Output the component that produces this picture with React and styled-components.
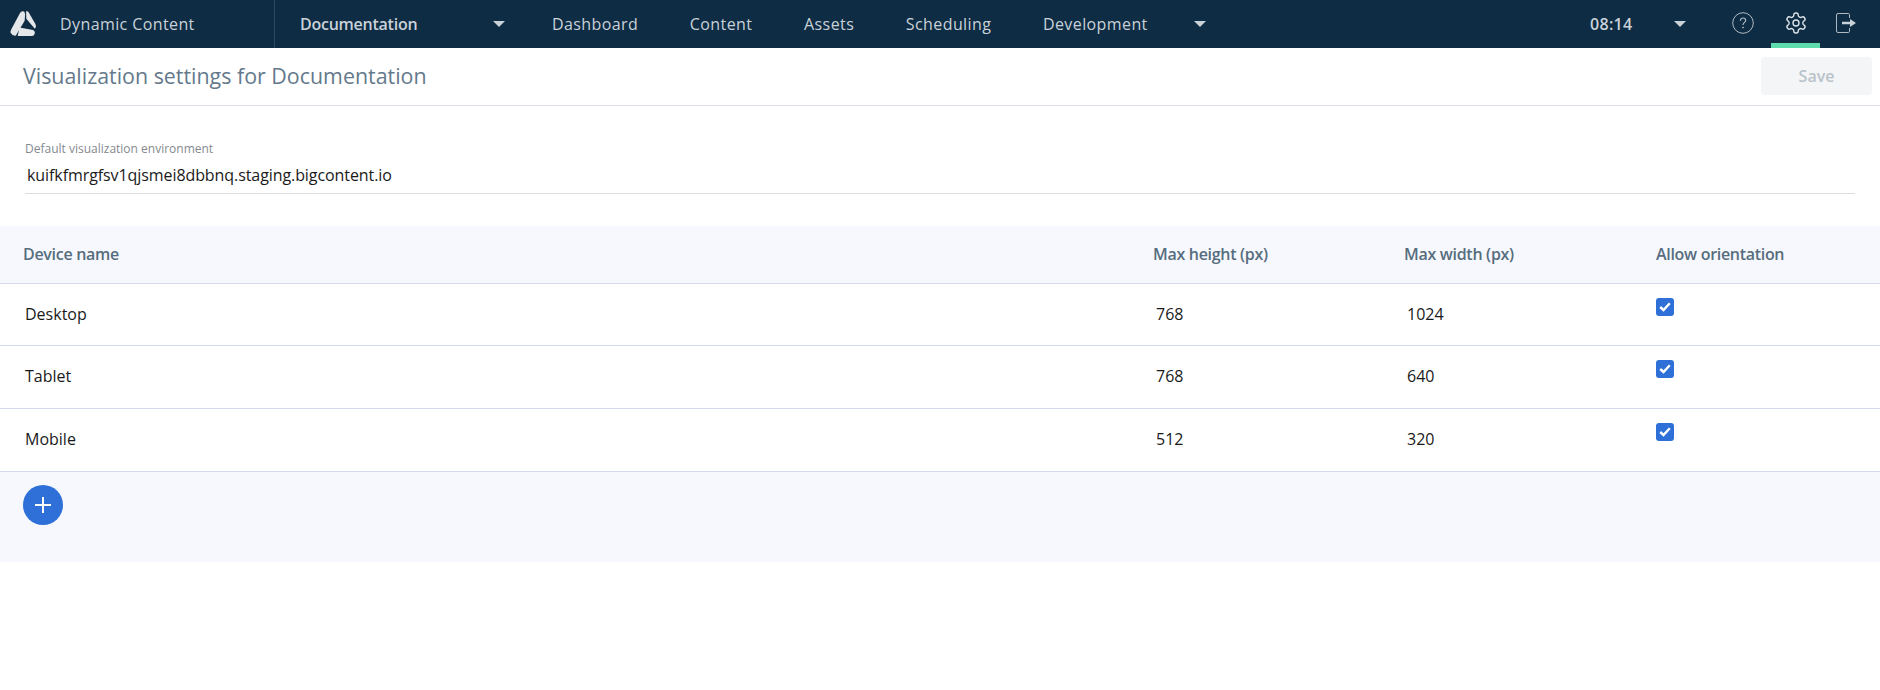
import styled, { createGlobalStyle } from 'styled-components'

const GlobalStyle = createGlobalStyle`
  html, body { margin: 0; padding: 0; background: #fff; }
  body { font-family: "Open Sans", "Noto Sans", sans-serif; }
  * { box-sizing: border-box; }
`

const Page = styled.div`
  width: 1880px;
  height: 690px;
  overflow: hidden;
`
const Header = styled.header`
  height: 48px;
  background: #0e2c44;
  display: flex;
  align-items: stretch;
  color: #c9d2d9;
  font-size: 16px;
`
const Brand = styled.div`
  width: 275px;
  border-right: 1px solid #31495d;
  display: flex;
  align-items: center;
  padding-left: 10px;
  gap: 24px;
  letter-spacing: 0.4px;
  svg { margin-bottom: 2px; }
`
const Account = styled.div`
  width: 230px;
  padding-left: 25px;
  display: flex;
  align-items: center;
  justify-content: space-between;
  font-weight: 600;
  letter-spacing: -0.25px;
`
const Caret = styled.span`
  width: 0;
  height: 0;
  border-left: 6px solid transparent;
  border-right: 6px solid transparent;
  border-top: 6px solid #c9d2d9;
`
const Nav = styled.nav`
  display: flex;
  align-items: center;
  margin-left: 47px;
  gap: 51.7px;
  letter-spacing: 0.4px;
`
const NavItem = styled.span`
  white-space: nowrap;
`
const NavCaret = styled(Caret)`
  margin-left: -5px;
`
const Right = styled.div`
  margin-left: auto;
  display: flex;
  align-items: stretch;
  padding-right: 8px;
`
const Clock = styled.div`
  display: flex;
  align-items: center;
  font-weight: 600;
  width: 125px;
  gap: 42px;
  letter-spacing: 0.3px;
`
const IconButton = styled.div`
  width: ${p => p.$w || 50}px;
  padding-bottom: 2px;
  display: flex;
  align-items: center;
  justify-content: center;
  position: relative;
  ${p => p.$active && `
    &::after {
      content: "";
      position: absolute;
      left: 0; right: 0; bottom: 0;
      height: 5px;
      background: #5fdcab;
    }
  `}
`
const SubBar = styled.div`
  height: 58px;
  border-bottom: 1px solid #dfe1f5;
  display: flex;
  align-items: center;
  justify-content: space-between;
  padding: 0 8px 2px 23px;
`
const Title = styled.h1`
  margin: 0;
  font-size: 21.4px;
  font-weight: 400;
  color: #64798b;
`
const SaveButton = styled.button`
  width: 111px;
  height: 38px;
  border: 0;
  border-radius: 4px;
  background: #f3f5f6;
  color: #b9c3ca;
  font: 600 16px "Open Sans", sans-serif;
`
const Field = styled.div`
  padding: 35px 25px 0;
  height: 120px;
`
const FieldLabel = styled.div`
  font-size: 12px;
  line-height: 15px;
  color: #858a8f;
`
const FieldValue = styled.div`
  margin-top: 7px;
  height: 31px;
  padding: 0 2px;
  font-size: 16px;
  line-height: 24px;
  letter-spacing: -0.08px;
  color: #1a1a1a;
  border-bottom: 1px solid #d9dde0;
`
const HeadRow = styled.div`
  display: grid;
  grid-template-columns: 1153px 251px 252px 1fr;
  align-items: center;
  height: 58px;
  padding-bottom: 2px;
  background: #f7f8fd;
  border-bottom: 1px solid #d5daf0;
`
const HeadCell = styled.div`
  padding-left: ${p => (p.$first ? 23 : 0)}px;
  font-size: 16px;
  font-weight: 600;
  letter-spacing: -0.3px;
  color: #566d7e;
`
const Row = styled.div`
  display: grid;
  grid-template-columns: 1153px 251px 252px 1fr;
  height: ${p => p.$h}px;
  border-bottom: 1px solid #d5daf0;
`
const Cell = styled.div`
  padding: 18px 0 0 ${p => (p.$first ? 25 : 3)}px;
  font-size: 16px;
  line-height: 24px;
  color: #1a1a1a;
`
const CheckCell = styled.div`
  padding-top: 14px;
`
const Checkbox = styled.span`
  display: flex;
  align-items: center;
  justify-content: center;
  width: 18px;
  height: 18px;
  border-radius: 3px;
  background: #2e6fd8;
`
const Footer = styled.div`
  height: 90px;
  background: #f7f8fd;
  padding: 13px 23px;
`
const AddButton = styled.button`
  width: 40px;
  height: 40px;
  border: 0;
  padding: 0;
  border-radius: 50%;
  background: #2e6fd8;
  display: flex;
  align-items: center;
  justify-content: center;
`

const devices = [
  { name: 'Desktop', height: 768, width: 1024, h: 62 },
  { name: 'Tablet', height: 768, width: 640, h: 63 },
  { name: 'Mobile', height: 512, width: 320, h: 63 },
]

const Logo = () => (
  <svg width="26" height="26" viewBox="0 0 22 24" preserveAspectRatio="none" fill="#e4e8eb">
    <path d="M8.6 2.5 Q10.5 0.4 12.2 1.5 L12.8 4 L12.4 10 L5 23.6 Q2 24 0.8 21.5 Q0 20 1 18 Z" />
    <path d="M13.6 1 L15.5 1.5 L21.5 13 Q22.5 16 21 17.2 L13.8 8 Z" />
    <path d="M8 16.2 L19.5 18.5 Q22 20 20.5 22.8 Q20 24 18 24 L6.5 24 Z" />
  </svg>
)

const HelpIcon = () => (
  <svg width="22" height="22" viewBox="0 0 22 22" fill="none" stroke="#aeb9c1" strokeWidth="1">
    <circle cx="11" cy="11" r="10.3" />
    <path d="M8.4 8.7 C8.4 7 9.6 6 11 6 C12.5 6 13.7 7 13.7 8.5 C13.7 10.4 11 10.5 11 13" strokeWidth="1.2" />
    <circle cx="11" cy="15.6" r="0.5" fill="#aeb9c1" />
  </svg>
)

const GearIcon = () => (
  <svg width="24" height="24" viewBox="0 0 24 24" fill="none" stroke="#dfe4e8" strokeWidth="1.4" strokeLinecap="round" strokeLinejoin="round">
    <path d="M12.22 2h-.44a2 2 0 0 0-2 2v.18a2 2 0 0 1-1 1.73l-.43.25a2 2 0 0 1-2 0l-.15-.08a2 2 0 0 0-2.73.73l-.22.38a2 2 0 0 0 .73 2.73l.15.1a2 2 0 0 1 1 1.72v.51a2 2 0 0 1-1 1.74l-.15.09a2 2 0 0 0-.73 2.73l.22.38a2 2 0 0 0 2.73.73l.15-.08a2 2 0 0 1 2 0l.43.25a2 2 0 0 1 1 1.73V20a2 2 0 0 0 2 2h.44a2 2 0 0 0 2-2v-.18a2 2 0 0 1 1-1.73l.43-.25a2 2 0 0 1 2 0l.15.08a2 2 0 0 0 2.73-.73l.22-.39a2 2 0 0 0-.73-2.73l-.15-.08a2 2 0 0 1-1-1.74v-.5a2 2 0 0 1 1-1.74l.15-.09a2 2 0 0 0 .73-2.73l-.22-.38a2 2 0 0 0-2.73-.73l-.15.08a2 2 0 0 1-2 0l-.43-.25a2 2 0 0 1-1-1.73V4a2 2 0 0 0-2-2z" />
    <circle cx="12" cy="12" r="3" />
  </svg>
)

const LogoutIcon = () => (
  <svg width="20" height="20" viewBox="0 0 20 20" fill="none">
    <path d="M13.5 5 V1.8 A1.3 1.3 0 0 0 12.2 0.5 H2 A1.5 1.5 0 0 0 0.5 2 V18 A1.5 1.5 0 0 0 2 19.5 H12.2 A1.3 1.3 0 0 0 13.5 18.2 V15" stroke="#aeb9c1" strokeWidth="1" />
    <path d="M6 8.7 H14 V6 L20 10 L14 14 V11.3 H6 Z" fill="#c9d2d9" />
  </svg>
)

const CheckIcon = () => (
  <svg width="12" height="10" viewBox="0 0 12 10" fill="none" stroke="#fff" strokeWidth="2.4">
    <path d="M1.2 5 L4.5 8 L10.8 1.2" />
  </svg>
)

const PlusIcon = () => (
  <svg width="16" height="16" viewBox="0 0 16 16" stroke="#fff" strokeWidth="2">
    <path d="M8 0 V16 M0 8 H16" />
  </svg>
)

const App = () => {
  return (
    <Page>
      <GlobalStyle />
      <Header>
        <Brand>
          <Logo />
          <span>Dynamic Content</span>
        </Brand>
        <Account>
          <span>Documentation</span>
          <Caret />
        </Account>
        <Nav>
          <NavItem>Dashboard</NavItem>
          <NavItem>Content</NavItem>
          <NavItem>Assets</NavItem>
          <NavItem>Scheduling</NavItem>
          <NavItem>Development</NavItem>
          <NavCaret />
        </Nav>
        <Right>
          <Clock>
            <span>08:14</span>
            <Caret />
          </Clock>
          <IconButton $w={56}><HelpIcon /></IconButton>
          <IconButton $w={49} $active><GearIcon /></IconButton>
          <IconButton $w={52}><LogoutIcon /></IconButton>
        </Right>
      </Header>
      <SubBar>
        <Title>Visualization settings for Documentation</Title>
        <SaveButton disabled>Save</SaveButton>
      </SubBar>
      <Field>
        <FieldLabel>Default visualization environment</FieldLabel>
        <FieldValue>kuifkfmrgfsv1qjsmei8dbbnq.staging.bigcontent.io</FieldValue>
      </Field>
      <HeadRow>
        <HeadCell $first>Device name</HeadCell>
        <HeadCell>Max height (px)</HeadCell>
        <HeadCell>Max width (px)</HeadCell>
        <HeadCell>Allow orientation</HeadCell>
      </HeadRow>
      {devices.map(d => (
        <Row key={d.name} $h={d.h}>
          <Cell $first>{d.name}</Cell>
          <Cell>{d.height}</Cell>
          <Cell>{d.width}</Cell>
          <CheckCell>
            <Checkbox><CheckIcon /></Checkbox>
          </CheckCell>
        </Row>
      ))}
      <Footer>
        <AddButton><PlusIcon /></AddButton>
      </Footer>
    </Page>
  )
}

export default App
